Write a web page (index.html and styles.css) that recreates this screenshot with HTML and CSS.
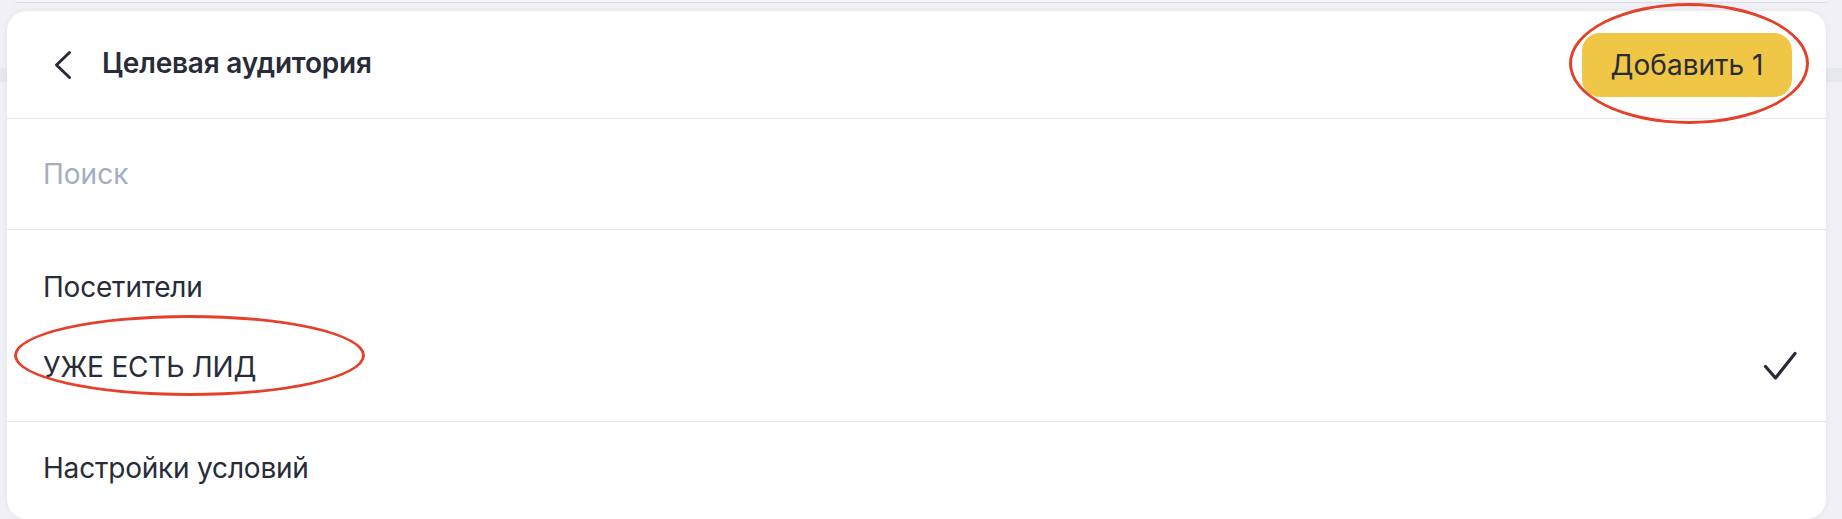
FILE: index.html
```html
<!DOCTYPE html>
<html lang="ru">
<head>
<meta charset="utf-8">
<title>Целевая аудитория</title>
<link rel="stylesheet" href="styles.css">
</head>
<body>
<div class="page">
  <div class="prev-card"></div>
  <div class="card">
    <div class="header">
      <button class="back" type="button" aria-label="Назад">
        <svg width="20" height="30" viewBox="0 0 20 30"><polyline points="16.5,2.5 3.5,15 16.5,27.5" fill="none" stroke="#282c39" stroke-width="3" stroke-linecap="round" stroke-linejoin="round"/></svg>
      </button>
      <div class="title">Целевая аудитория</div>
      <button class="add" type="button">Добавить 1</button>
    </div>
    <div class="search">
      <input class="search-input" type="text" placeholder="Поиск">
    </div>
    <div class="list">
      <div class="item">Посетители</div>
      <div class="item item-selected">
        <span>УЖЕ ЕСТЬ ЛИД</span>
        <svg class="check" width="34" height="30" viewBox="0 0 34 30"><polyline points="2.5,15.5 12.5,27 32,2.5" fill="none" stroke="#282c39" stroke-width="3.2" stroke-linecap="round" stroke-linejoin="round"/></svg>
      </div>
    </div>
    <div class="footer">
      <div class="item">Настройки условий</div>
    </div>
  </div>
  <div class="mark mark-button"></div>
  <div class="mark mark-item"></div>
</div>
</body>
</html>
```
FILE: styles.css
```css
* { box-sizing: border-box; }
html, body { margin: 0; padding: 0; }
body {
  height: 519px;
  overflow: hidden;
  font-family: Inter, "Noto Sans", sans-serif;
  color: #282c39;
  background: linear-gradient(to bottom, #f0f0f5 0, #f0f0f5 68px, #e7e7ee 68px, #e7e7ee 82px, #f0f0f5 82px);
}
.page { position: relative; }
.prev-card {
  height: 3px;
  margin: 0 14px;
  background: #f4f4f8;
  border-bottom: 1px solid #dcdce6;
  border-radius: 0 0 10px 10px;
}
.card {
  margin: 8px 16px 0 7px;
  height: 508px;
  background: #ffffff;
  border-radius: 20px;
  box-shadow: 0 0 6px rgba(40, 40, 80, 0.06);
  overflow: hidden;
}
.header {
  height: 108px;
  display: flex;
  align-items: center;
  padding: 0 34px 0 46px;
  border-bottom: 1px solid #e6e6ee;
}
.back {
  border: 0;
  background: none;
  padding: 0;
  width: 20px;
  height: 30px;
  display: flex;
  cursor: pointer;
}
.title {
  margin-left: 29px;
  font-size: 28px;
  font-weight: 600;
  line-height: 34px;
  letter-spacing: -0.2px;
  margin-top: -3px;
}
.add {
  margin-left: auto;
  width: 210px;
  height: 64px;
  border: 0;
  border-radius: 18px;
  background: #f0c646;
  color: #282c39;
  font-family: Inter, "Noto Sans", sans-serif;
  font-size: 28px;
  font-weight: 400;
  line-height: 34px;
  padding: 0;
  cursor: pointer;
}
.search {
  height: 111px;
  display: flex;
  align-items: center;
  padding: 0 36px;
  border-bottom: 1px solid #e6e6ee;
}
.search-input {
  border: 0;
  outline: none;
  width: 100%;
  padding: 0;
  font-family: Inter, "Noto Sans", sans-serif;
  font-size: 28px;
  line-height: 34px;
  color: #282c39;
  background: transparent;
}
.search-input::placeholder { color: #a6adc0; }
.list {
  padding: 17px 0 14px;
  border-bottom: 1px solid #e6e6ee;
}
.footer { padding: 6px 0 0; }
.item {
  height: 80px;
  display: flex;
  align-items: center;
  justify-content: space-between;
  padding: 0 29px 0 36px;
  font-size: 28px;
  line-height: 34px;
  letter-spacing: -0.2px;
}
.check { display: block; margin-top: -2px; }
.mark {
  position: absolute;
  border: 3.5px solid #e4402a;
  border-radius: 50%;
  pointer-events: none;
}
.mark-button { left: 1569px; top: 3px; width: 240px; height: 121px; }
.mark-item { left: 14px; top: 315px; width: 351px; height: 81px; }
```
